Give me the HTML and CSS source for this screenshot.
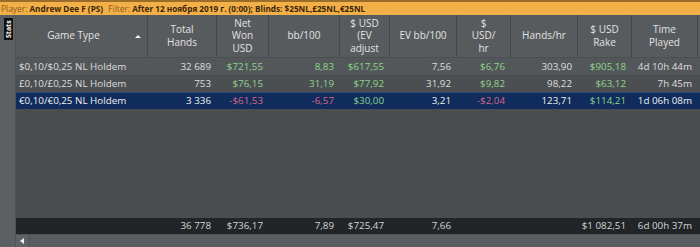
FILE: index.html
```html
<!doctype html>
<html lang="en">
<head>
	<meta charset="UTF-8">
	<title>Stats</title>
	<link rel="stylesheet" href="styles.css">
</head>
<body>
	<div class="topbar">
		<span class="lbl">Player:</span> <b>Andrew Dee F (PS)</b>
		<span class="lbl gap">Filter:</span> <b>After 12 ноября 2019 г. (0:00); Blinds: $25NL,£25NL,€25NL</b>
	</div>
	<div class="main">
		<div class="sidebar"><span class="tab">Stats</span></div>
		<div class="grid">
			<div class="row head">
				<div class="hc gametype">Game Type<span class="sort"></span></div>
				<div class="hc">Total<br>Hands</div>
				<div class="hc">Net<br>Won<br>USD</div>
				<div class="hc">bb/100</div>
				<div class="hc">$ USD<br>(EV<br>adjust</div>
				<div class="hc">EV bb/100</div>
				<div class="hc">$<br>USD/<br>hr</div>
				<div class="hc">Hands/hr</div>
				<div class="hc">$ USD<br>Rake</div>
				<div class="hc">Time<br>Played</div>
			</div>
			<div class="row data odd">
				<div class="c name">$0,10/$0,25 NL Holdem</div>
				<div class="c">32 689</div>
				<div class="c pos">$721,55</div>
				<div class="c pos">8,83</div>
				<div class="c pos">$617,55</div>
				<div class="c">7,56</div>
				<div class="c pos">$6,76</div>
				<div class="c">303,90</div>
				<div class="c pos">$905,18</div>
				<div class="c">4d 10h 44m</div>
			</div>
			<div class="row data even">
				<div class="c name">£0,10/£0,25 NL Holdem</div>
				<div class="c">753</div>
				<div class="c pos">$76,15</div>
				<div class="c pos">31,19</div>
				<div class="c pos">$77,92</div>
				<div class="c">31,92</div>
				<div class="c pos">$9,82</div>
				<div class="c">98,22</div>
				<div class="c pos">$63,12</div>
				<div class="c">7h 45m</div>
			</div>
			<div class="row data selected">
				<div class="c name">€0,10/€0,25 NL Holdem</div>
				<div class="c">3 336</div>
				<div class="c neg">-$61,53</div>
				<div class="c neg">-6,57</div>
				<div class="c pos">$30,00</div>
				<div class="c">3,21</div>
				<div class="c neg">-$2,04</div>
				<div class="c">123,71</div>
				<div class="c pos">$114,21</div>
				<div class="c">1d 06h 08m</div>
			</div>
			<div class="filler"></div>
			<div class="row total">
				<div class="c name"></div>
				<div class="c">36 778</div>
				<div class="c">$736,17</div>
				<div class="c">7,89</div>
				<div class="c">$725,47</div>
				<div class="c">7,66</div>
				<div class="c"></div>
				<div class="c"></div>
				<div class="c">$1 082,51</div>
				<div class="c">6d 00h 37m</div>
			</div>
			<div class="scrollbar"><span class="arrow"></span></div>
		</div>
	</div>
</body>
</html>
```
FILE: styles.css
```css
*{
	margin: 0;
	padding: 0;
	box-sizing: border-box;
}
body{
	width: 700px;
	height: 247px;
	overflow: hidden;
	background: #4a4d50;
	font-family: "Open Sans", "Noto Sans", sans-serif;
	font-size: 9.8px;
	color: #dedede;
}
.topbar{
	height: 15px;
	border-top: 2px solid #9a6e2a;
	background: #f4b048;
	color: #3a2608;
	font-size: 8.2px;
	line-height: 13px;
	white-space: nowrap;
	padding-left: 1px;
}
.topbar .lbl{
	color: #8a5a16;
	font-size: 8.4px;
}
.topbar .gap{
	margin-left: 3px;
}
.main{
	display: flex;
	height: 232px;
}
.sidebar{
	width: 16px;
	background: #5d6062;
	border-right: 1px solid #515456;
	padding: 3px 0 0 4px;
}
.tab{
	display: block;
	width: 9px;
	height: 22px;
	background: #111;
	color: #fff;
	font-size: 7px;
	font-weight: bold;
	writing-mode: vertical-rl;
	transform: rotate(180deg);
	text-align: center;
	line-height: 9px;
}
.grid{
	flex: 1;
	display: flex;
	flex-direction: column;
}
.row{
	display: grid;
	grid-template-columns: 132px 69px 52px 71px 50px 67px 54px 67px 54px 66px;
}
.head{
	height: 43px;
	background: #585b5e;
	border-bottom: 1px solid #4c4f52;
	font-size: 10px;
}
.hc{
	display: flex;
	align-items: center;
	justify-content: center;
	text-align: center;
	line-height: 12.5px;
	border-right: 1px solid #46494c;
	color: #e2e2e2;
	padding-bottom: 1px;
}
.gametype{
	position: relative;
	padding-right: 16px;
}
.sort{
	position: absolute;
	right: 6px;
	top: 20px;
	border-left: 3px solid transparent;
	border-right: 3px solid transparent;
	border-bottom: 3px solid #f2f2f2;
}
.data{
	height: 17px;
	line-height: 17px;
}
.odd{
	background: #545759;
}
.even{
	background: #4c4f52;
}
.selected{
	background: #0f2c5c;
	border-top: 1px solid #2a4a7e;
	line-height: 16px;
	color: #f0f0f0;
}
.c{
	text-align: right;
	padding-right: 6px;
	white-space: nowrap;
}
.c.name{
	text-align: left;
	padding-left: 3px;
}
.pos{
	color: #8dd48d;
}
.neg{
	color: #d8648a;
}
.filler{
	flex: 1;
}
.total{
	height: 16px;
	line-height: 16px;
	background: #222528;
	color: #d4d4d4;
}
.scrollbar{
	height: 13px;
	background: #5a5d60;
	border-top: 1px solid #4f5255;
}
.arrow{
	display: block;
	width: 13px;
	height: 12px;
	background: #606366;
	border-right: 1px solid #4f5255;
	position: relative;
}
.arrow::after{
	content: "";
	position: absolute;
	left: 4px;
	top: 3px;
	border-top: 3px solid transparent;
	border-bottom: 3px solid transparent;
	border-right: 4px solid #f0f0f0;
}
```
